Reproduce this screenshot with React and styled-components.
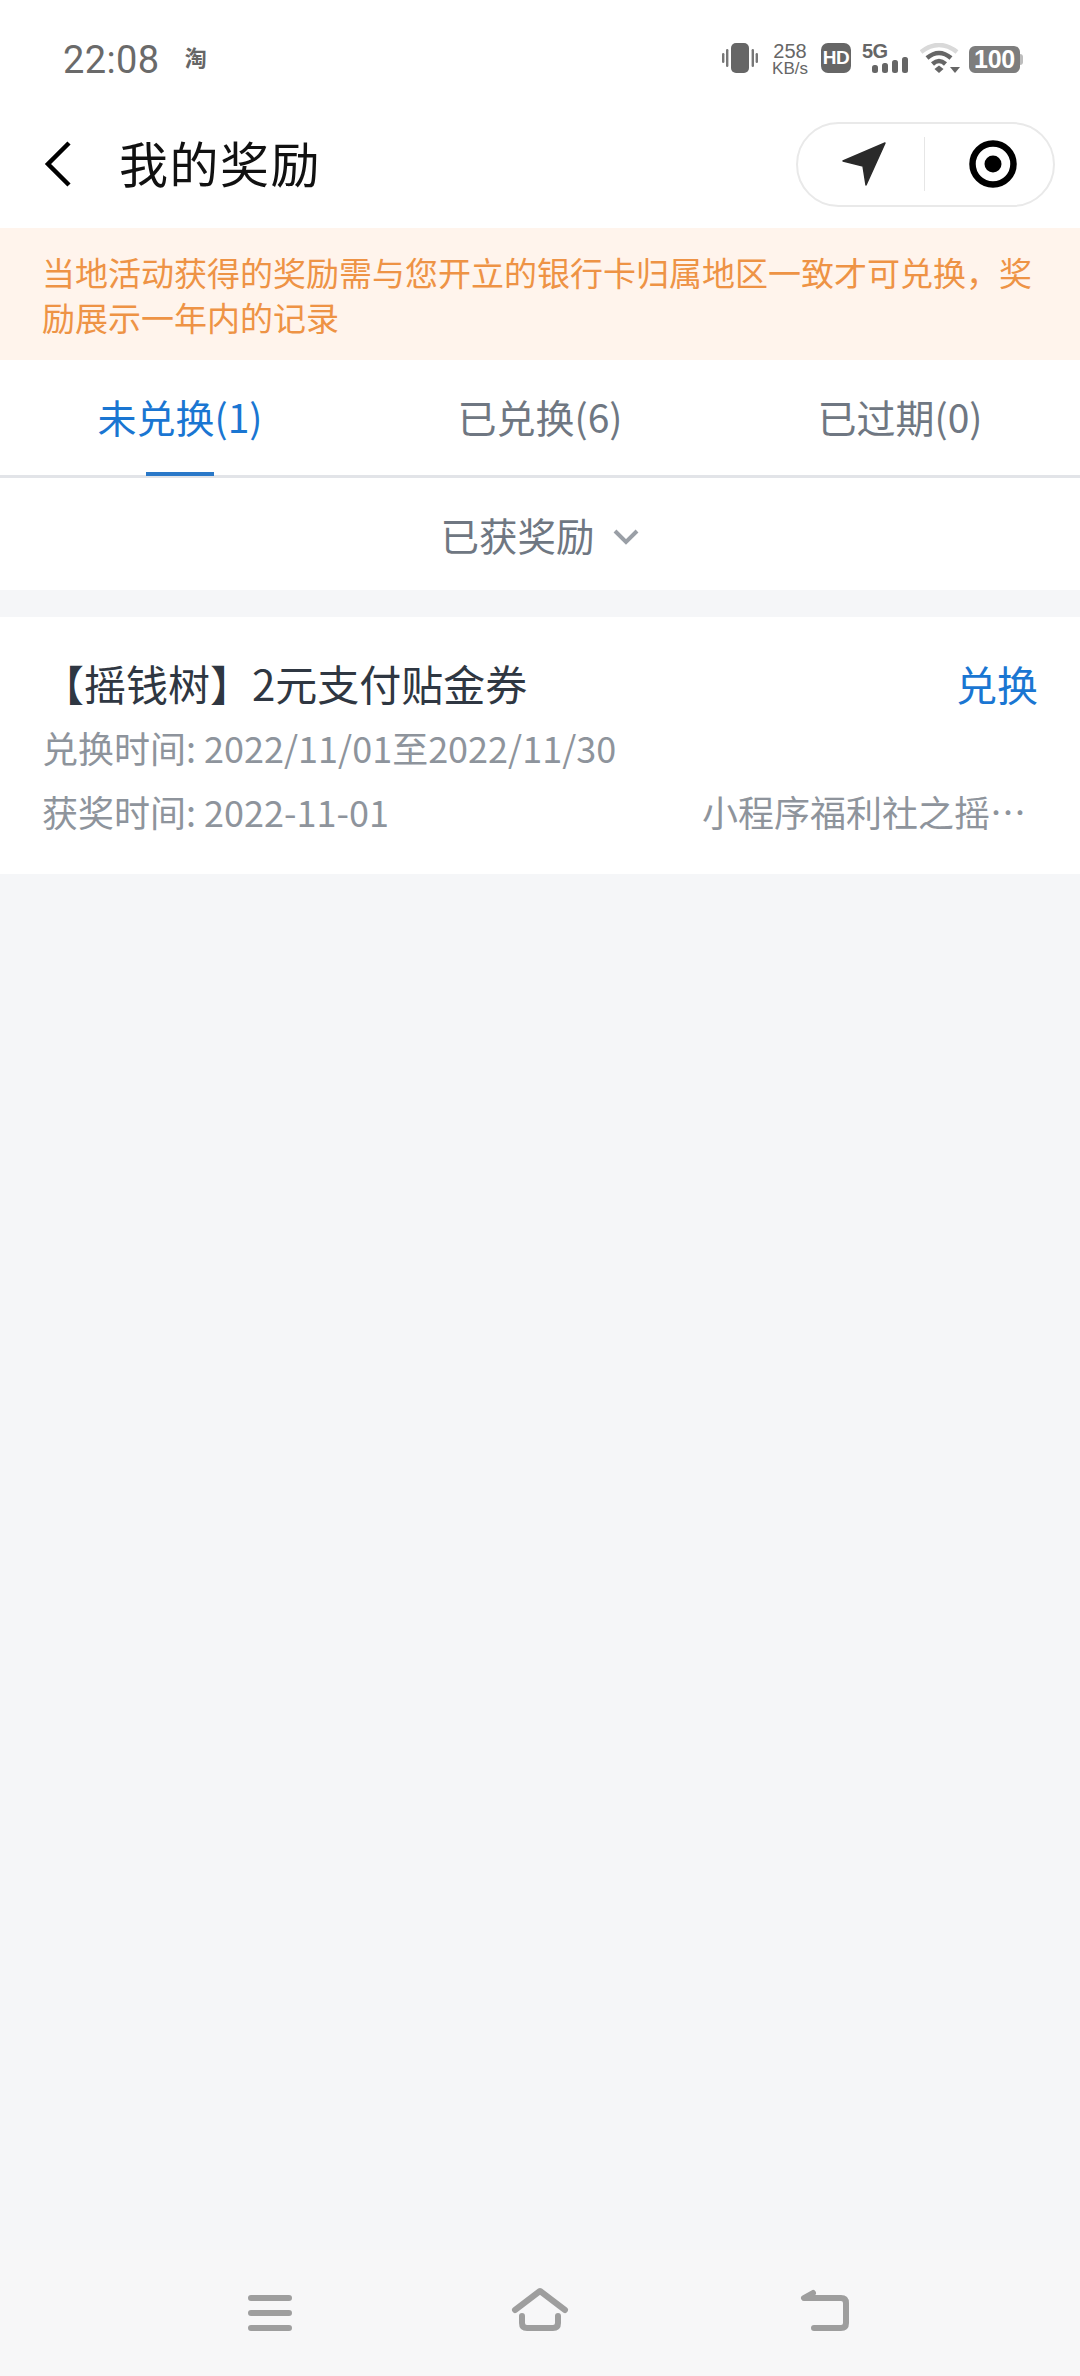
import React from "react";
import styled, { createGlobalStyle } from "styled-components";

const Global = createGlobalStyle`
  html, body { margin: 0; padding: 0; background: #f5f6f8; }
  * { box-sizing: border-box; }
`;

const CJK = `"Noto Sans CJK SC", "Noto Sans", sans-serif`;

const Page = styled.div`
  width: 1080px;
  height: 2376px;
  display: flex;
  flex-direction: column;
  background: #f5f6f8;
  font-family: ${CJK};
  overflow: hidden;
`;

const StatusBar = styled.div`
  height: 80px;
  flex: none;
  background: #fff;
  display: flex;
  align-items: flex-start;
  padding: 43px 60px 0 63px;
  color: #666;
`;
const Time = styled.span`
  font-family: Roboto, sans-serif;
  font-size: 38px;
  line-height: 34px;
  letter-spacing: 0.4px;
  color: #6a6a6a;
`;
const AppMark = styled.span`
  font-size: 22px;
  font-weight: 700;
  line-height: 24px;
  margin: 1px 0 0 25px;
  color: #666;
`;
const StatusIcons = styled.div`
  margin-left: auto;
  display: flex;
  align-items: flex-start;
`;
const Speed = styled.div`
  width: 36px;
  margin: 0 13px 0 14px;
  display: flex;
  flex-direction: column;
  align-items: center;
  font-family: "Liberation Sans", sans-serif;
  color: #666;
`;
const SpeedValue = styled.span`
  font-size: 20px;
  line-height: 17px;
`;
const SpeedUnit = styled.span`
  font-size: 17px;
  line-height: 15px;
  margin-top: 1px;
  white-space: nowrap;
`;
const HD = styled.div`
  width: 30px;
  height: 30px;
  border-radius: 7px;
  background: #666;
  color: #fff;
  font: 700 19px/30px "Liberation Sans", sans-serif;
  text-align: center;
  letter-spacing: -0.5px;
`;
const Signal = styled.div`
  width: 46px;
  height: 30px;
  margin-left: 11px;
  position: relative;
`;
const SignalLabel = styled.span`
  display: block;
  font: 700 20px/16px "Liberation Sans", sans-serif;
  color: #666;
  letter-spacing: -0.6px;
`;
const SignalBars = styled.svg`
  display: block;
  position: absolute;
  left: 10px;
  top: 14px;
`;
const VibrateIcon = styled.svg`
  display: block;
  width: 36px;
  height: 30px;
`;
const WifiIcon = styled.svg`
  display: block;
  width: 40px;
  height: 30px;
  margin: 0 9px 0 12px;
`;
const Battery = styled.div`
  width: 51px;
  height: 27px;
  margin-top: 3px;
  border-radius: 6px;
  background: #7d7d7d;
  color: #fff;
  font: 700 25px/27px "Liberation Sans", sans-serif;
  text-align: center;
  letter-spacing: -0.3px;
  position: relative;
  &::after {
    content: "";
    position: absolute;
    left: 51px;
    top: 8px;
    width: 3px;
    height: 11px;
    border-radius: 0 3px 3px 0;
    background: #bdbdbd;
  }
`;

const NavBar = styled.div`
  height: 148px;
  flex: none;
  background: #fff;
  display: flex;
  align-items: center;
  padding: 20px 25px 0 44px;
`;
const BackIcon = styled.svg`
  display: block;
  width: 28px;
  height: 46px;
  margin-right: 47px;
`;
const Title = styled.h1`
  margin: 0 0 5px;
  font-size: 49px;
  line-height: 60px;
  font-weight: 400;
  letter-spacing: 1.5px;
  color: #111;
`;
const Capsule = styled.div`
  margin-left: auto;
  width: 259px;
  height: 85px;
  border: 2px solid #e9e9e9;
  border-radius: 43px;
  display: flex;
  align-items: center;
`;
const CapsuleSlot = styled.div`
  flex: 1;
  display: flex;
  justify-content: center;
  align-items: center;
  padding-left: ${(p) => p.$inset}px;
`;
const CapsuleDivider = styled.div`
  width: 1px;
  height: 54px;
  background: #e6e6e6;
`;

const Notice = styled.div`
  height: 132px;
  flex: none;
  background: #fff4ec;
  color: #ee9345;
  font-size: 33px;
  line-height: 45px;
  padding: 22px 40px 0 42px;
`;

const Tabs = styled.div`
  height: 118px;
  flex: none;
  background: #fff;
  display: grid;
  grid-template-columns: repeat(3, 1fr);
  border-bottom: 3px solid #e2e4e8;
`;
const Tab = styled.div`
  position: relative;
  display: flex;
  justify-content: center;
  padding-top: 28px;
  font-size: 39px;
  line-height: 56px;
  color: ${(p) => (p.$active ? "#1a76d2" : "#6f7782")};
  ${(p) =>
    p.$active &&
    `&::after {
      content: "";
      position: absolute;
      left: 146px;
      bottom: -1px;
      width: 68px;
      height: 4px;
      background: #2a78c8;
    }`}
`;

const Filter = styled.div`
  height: 112px;
  flex: none;
  background: #fff;
  display: flex;
  justify-content: center;
  align-items: center;
  gap: 17px;
  font-size: 38.5px;
  color: #6f7782;
`;
const ChevronIcon = styled.svg`
  display: block;
  width: 28px;
  height: 18px;
  margin-top: 6px;
`;

const Card = styled.div`
  margin-top: 27px;
  height: 257px;
  flex: none;
  background: #fff;
  padding: 37px 42px 0 42px;
  display: flex;
  flex-direction: column;
`;
const CardTop = styled.div`
  display: flex;
  justify-content: space-between;
  align-items: center;
  height: 58px;
`;
const RewardName = styled.div`
  font-size: 42px;
  color: #2f3742;
  line-height: 58px;
`;
const Redeem = styled.div`
  font-size: 41px;
  color: #1a76d2;
  line-height: 58px;
`;
const MetaRow = styled.div`
  display: flex;
  justify-content: space-between;
  font-size: 36px;
  line-height: 50px;
  color: #8e949c;
  margin-top: ${(p) => p.$top}px;
`;
const Source = styled.span`
  margin-right: 12px;
  white-space: nowrap;
`;

const Spacer = styled.div`
  flex: 1;
`;

const BottomNav = styled.div`
  height: 126px;
  flex: none;
  background: #f7f7f8;
  display: flex;
  align-items: flex-start;
  padding: 30px 0 0 240px;
`;
const NavIcon = styled.svg`
  display: block;
  width: 64px;
  height: 56px;
  margin-left: ${(p) => p.$gap || 0}px;
`;

const Stroke = { stroke: "#9e9e9e", strokeWidth: 6, strokeLinecap: "round", strokeLinejoin: "round", fill: "none" };

export default function App() {
  return (
    <Page>
      <Global />
      <StatusBar>
        <Time>22:08</Time>
        <AppMark>淘</AppMark>
        <StatusIcons>
          <VibrateIcon viewBox="0 0 36 30">
            <rect x="9" y="0" width="18" height="30" rx="5" fill="#666" />
            <rect x="0" y="10" width="2.4" height="10" rx="1.2" fill="#777" />
            <rect x="4" y="6" width="2.4" height="18" rx="1.2" fill="#777" />
            <rect x="29.6" y="6" width="2.4" height="18" rx="1.2" fill="#777" />
            <rect x="33.6" y="10" width="2.4" height="10" rx="1.2" fill="#777" />
          </VibrateIcon>
          <Speed>
            <SpeedValue>258</SpeedValue>
            <SpeedUnit>KB/s</SpeedUnit>
          </Speed>
          <HD>HD</HD>
          <Signal>
            <SignalLabel>5G</SignalLabel>
            <SignalBars width="36" height="16" viewBox="0 0 36 16">
              <rect x="0" y="8" width="6" height="8" rx="2.5" fill="#666" />
              <rect x="10" y="6" width="6" height="10" rx="2.5" fill="#666" />
              <rect x="20" y="3" width="6" height="13" rx="2.5" fill="#666" />
              <rect x="30" y="0" width="6" height="16" rx="2.5" fill="#666" />
            </SignalBars>
          </Signal>
          <WifiIcon viewBox="0 0 40 30">
            <path d="M1 9 Q19 -5 37 9" stroke="#d9d9d9" strokeWidth="4.5" fill="none" />
            <path d="M7 15 Q19 5 31 15" stroke="#666" strokeWidth="4.5" fill="none" />
            <path d="M12.5 21 Q19 15 25.5 21" stroke="#666" strokeWidth="4.5" fill="none" />
            <path d="M14.5 26 L19 22.5 L23.5 26 L19 30 Z" fill="#666" />
            <path d="M30 24 L40 24 L35 30 Z" fill="#666" />
          </WifiIcon>
          <Battery>100</Battery>
        </StatusIcons>
      </StatusBar>

      <NavBar>
        <BackIcon viewBox="0 0 28 46">
          <path d="M25 2 L4 23 L25 44" stroke="#000" strokeWidth="4.5" fill="none" />
        </BackIcon>
        <Title>我的奖励</Title>
        <Capsule>
          <CapsuleSlot $inset={6}>
            <svg width="44" height="44" viewBox="0 0 44 44">
              <path d="M1 19 L43 1 L24 43 L21 24 Z" fill="#2a2a2a" stroke="#2a2a2a" strokeWidth="1.5" strokeLinejoin="round" />
            </svg>
          </CapsuleSlot>
          <CapsuleDivider />
          <CapsuleSlot $inset={8}>
            <svg width="48" height="48" viewBox="0 0 48 48">
              <circle cx="24" cy="24" r="20.5" stroke="#000" strokeWidth="6.5" fill="none" />
              <circle cx="24" cy="24" r="8.5" fill="#000" />
            </svg>
          </CapsuleSlot>
        </Capsule>
      </NavBar>

      <Notice>当地活动获得的奖励需与您开立的银行卡归属地区一致才可兑换，奖励展示一年内的记录</Notice>

      <Tabs>
        <Tab $active>未兑换(1)</Tab>
        <Tab>已兑换(6)</Tab>
        <Tab>已过期(0)</Tab>
      </Tabs>

      <Filter>
        已获奖励
        <ChevronIcon viewBox="0 0 28 18">
          <path d="M3 3 L14 14 L25 3" stroke="#9a9fa6" strokeWidth="4" fill="none" />
        </ChevronIcon>
      </Filter>

      <Card>
        <CardTop>
          <RewardName>【摇钱树】2元支付贴金券</RewardName>
          <Redeem>兑换</Redeem>
        </CardTop>
        <MetaRow $top={10}>
          <span>兑换时间: 2022/11/01至2022/11/30</span>
        </MetaRow>
        <MetaRow $top={14}>
          <span>获奖时间: 2022-11-01</span>
          <Source>小程序福利社之摇…</Source>
        </MetaRow>
      </Card>

      <Spacer />

      <BottomNav>
        <NavIcon viewBox="0 0 64 56">
          <path d="M11 18 H49 M11 33 H49 M11 48 H49" {...Stroke} />
        </NavIcon>
        <NavIcon $gap={204} viewBox="0 0 64 56">
          <path d="M7 30 L32 11 L57 30" {...Stroke} />
          <path d="M14 36 V43 Q14 48 19 48 H45 Q50 48 50 43 V36" {...Stroke} />
        </NavIcon>
        <NavIcon $gap={222} viewBox="0 0 64 56">
          <path d="M19 13 L10 18 H47 Q52 18 52 23 V43 Q52 48 47 48 H20" {...Stroke} />
        </NavIcon>
      </BottomNav>
    </Page>
  );
}
